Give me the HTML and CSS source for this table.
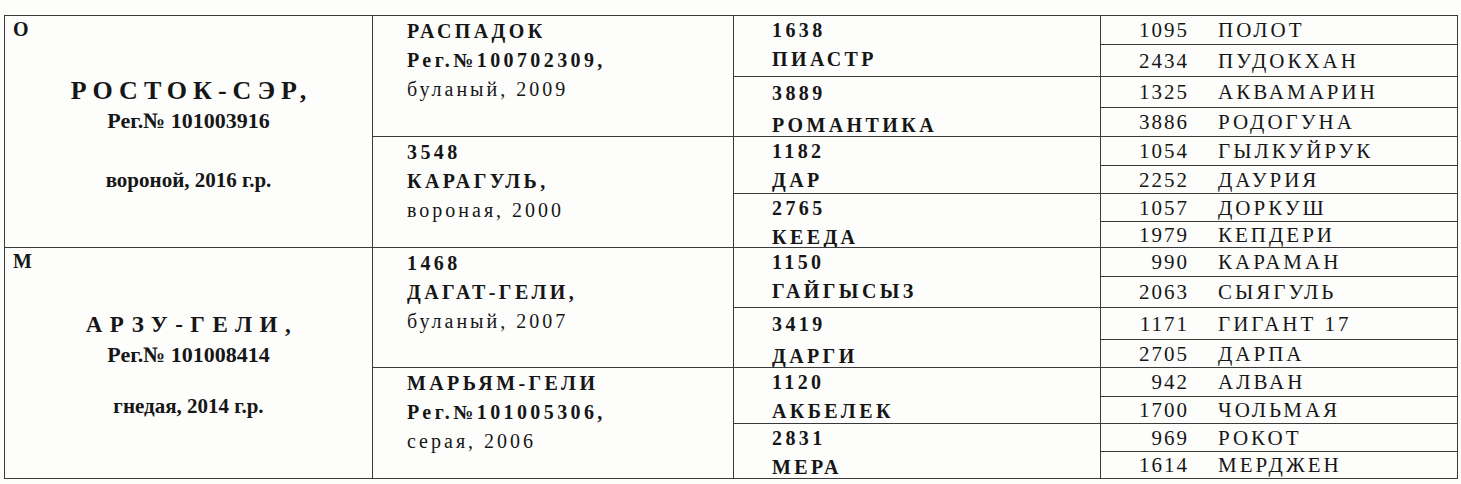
FILE: index.html
```html
<!DOCTYPE html>
<html lang="ru">
<head>
<meta charset="utf-8">
<title>Родословная</title>
<link rel="stylesheet" href="styles.css">
</head>
<body>
<div class="pedigree">
  <!-- sire half -->
  <div class="cell c1">
    <div class="label">О</div>
    <div class="horse-name">РОСТОК-СЭР,</div>
    <div class="horse-reg">Рег.№ 101003916</div>
    <div class="horse-date">вороной, 2016 г.р.</div>
  </div>
  <div class="cell c2">
    <div class="b">РАСПАДОК</div>
    <div class="b">Рег.№100702309,</div>
    <div class="r">буланый, 2009</div>
  </div>
  <div class="cell c3"><div>1638</div><div>ПИАСТР</div></div>
  <div class="cell c4"><span class="num">1095</span><span class="nm">ПОЛОТ</span></div>
  <div class="cell c4"><span class="num">2434</span><span class="nm">ПУДОКХАН</span></div>
  <div class="cell c3 wide"><div>3889</div><div>РОМАНТИКА</div></div>
  <div class="cell c4"><span class="num">1325</span><span class="nm">АКВАМАРИН</span></div>
  <div class="cell c4"><span class="num">3886</span><span class="nm">РОДОГУНА</span></div>
  <div class="cell c2">
    <div class="b">3548</div>
    <div class="b">КАРАГУЛЬ,</div>
    <div class="r">вороная, 2000</div>
  </div>
  <div class="cell c3"><div>1182</div><div>ДАР</div></div>
  <div class="cell c4"><span class="num">1054</span><span class="nm">ГЫЛКУЙРУК</span></div>
  <div class="cell c4"><span class="num">2252</span><span class="nm">ДАУРИЯ</span></div>
  <div class="cell c3"><div>2765</div><div>КЕЕДА</div></div>
  <div class="cell c4"><span class="num">1057</span><span class="nm">ДОРКУШ</span></div>
  <div class="cell c4"><span class="num">1979</span><span class="nm">КЕПДЕРИ</span></div>

  <!-- dam half -->
  <div class="cell c1">
    <div class="label">М</div>
    <div class="horse-name dam">АРЗУ-ГЕЛИ,</div>
    <div class="horse-reg">Рег.№ 101008414</div>
    <div class="horse-date dam-date">гнедая, 2014 г.р.</div>
  </div>
  <div class="cell c2">
    <div class="b">1468</div>
    <div class="b">ДАГАТ-ГЕЛИ,</div>
    <div class="r">буланый, 2007</div>
  </div>
  <div class="cell c3"><div>1150</div><div>ГАЙГЫСЫЗ</div></div>
  <div class="cell c4"><span class="num">990</span><span class="nm">КАРАМАН</span></div>
  <div class="cell c4"><span class="num">2063</span><span class="nm">СЫЯГУЛЬ</span></div>
  <div class="cell c3 wide"><div>3419</div><div>ДАРГИ</div></div>
  <div class="cell c4"><span class="num">1171</span><span class="nm">ГИГАНТ 17</span></div>
  <div class="cell c4"><span class="num">2705</span><span class="nm">ДАРПА</span></div>
  <div class="cell c2">
    <div class="b">МАРЬЯМ-ГЕЛИ</div>
    <div class="b">Рег.№101005306,</div>
    <div class="r">серая, 2006</div>
  </div>
  <div class="cell c3"><div>1120</div><div>АКБЕЛЕК</div></div>
  <div class="cell c4"><span class="num">942</span><span class="nm">АЛВАН</span></div>
  <div class="cell c4"><span class="num">1700</span><span class="nm">ЧОЛЬМАЯ</span></div>
  <div class="cell c3"><div>2831</div><div>МЕРА</div></div>
  <div class="cell c4"><span class="num">969</span><span class="nm">РОКОТ</span></div>
  <div class="cell c4"><span class="num">1614</span><span class="nm">МЕРДЖЕН</span></div>
</div>
</body>
</html>
```

FILE: styles.css
```css
html, body {
  margin: 0;
  padding: 0;
  background: #fdfdfc;
}

body {
  color: #161616;
  font-family: "Liberation Serif", "Times New Roman", "DejaVu Serif", serif;
}

.pedigree {
  margin: 15px 0 0 4px;
  display: grid;
  width: max-content;
  grid-template-columns: 368px 361px 367px 357px;
  grid-template-rows: 29px 32px 31px 29px 29px 28px 28px 26px 29px 31px 32px 28px 29px 27px 28px 27px;
  border-top: 1px solid #3a3a3a;
  border-left: 1px solid #3a3a3a;
}

.cell {
  box-sizing: border-box;
  border-right: 1px solid #3a3a3a;
  border-bottom: 1px solid #3a3a3a;
  overflow: hidden;
}

/* column 1: the horse itself */
.c1 {
  grid-column: 1;
  grid-row: span 8;
  padding: 3px 0 0 8px;
  display: flex;
  flex-direction: column;
  font-weight: bold;
}

.label {
  font-size: 20px;
  line-height: 20px;
  align-self: flex-start;
}

.horse-name,
.horse-reg,
.horse-date {
  text-align: center;
  margin-right: 8px;
}

.horse-name {
  margin-top: 37px;
  font-size: 26px;
  line-height: 30px;
  letter-spacing: 6px;
  padding-left: 6px;
}

.horse-name.dam {
  font-size: 23px;
  letter-spacing: 7.5px;
  padding-left: 7px;
  margin-top: 39px;
}

.horse-reg {
  font-size: 22px;
  line-height: 30px;
}

.horse-date {
  margin-top: 29px;
  font-size: 21px;
  line-height: 30px;
}

.horse-date.dam-date {
  margin-top: 21px;
}

/* column 2: parents */
.c2 {
  grid-column: 2;
  grid-row: span 4;
  padding: 1px 0 0 34px;
  font-size: 20px;
  line-height: 29px;
  letter-spacing: 3.4px;
}

.c2 .b {
  font-weight: bold;
}

.c2 .r {
  font-weight: normal;
  letter-spacing: 3px;
}

/* column 3: grandparents */
.c3 {
  grid-column: 3;
  grid-row: span 2;
  padding: 0 0 0 38px;
  font-size: 20px;
  line-height: 29px;
  font-weight: bold;
  letter-spacing: 3.4px;
}

.c3.wide {
  line-height: 32px;
  padding-top: 0;
}

/* column 4: great-grandparents */
.c4 {
  grid-column: 4;
  grid-row: span 1;
  display: grid;
  grid-template-columns: 88px 1fr;
  column-gap: 29px;
  align-items: center;
  font-size: 21px;
  line-height: 24px;
}

.num {
  text-align: right;
  letter-spacing: 2px;
}

.nm {
  letter-spacing: 3px;
  white-space: nowrap;
}
```
